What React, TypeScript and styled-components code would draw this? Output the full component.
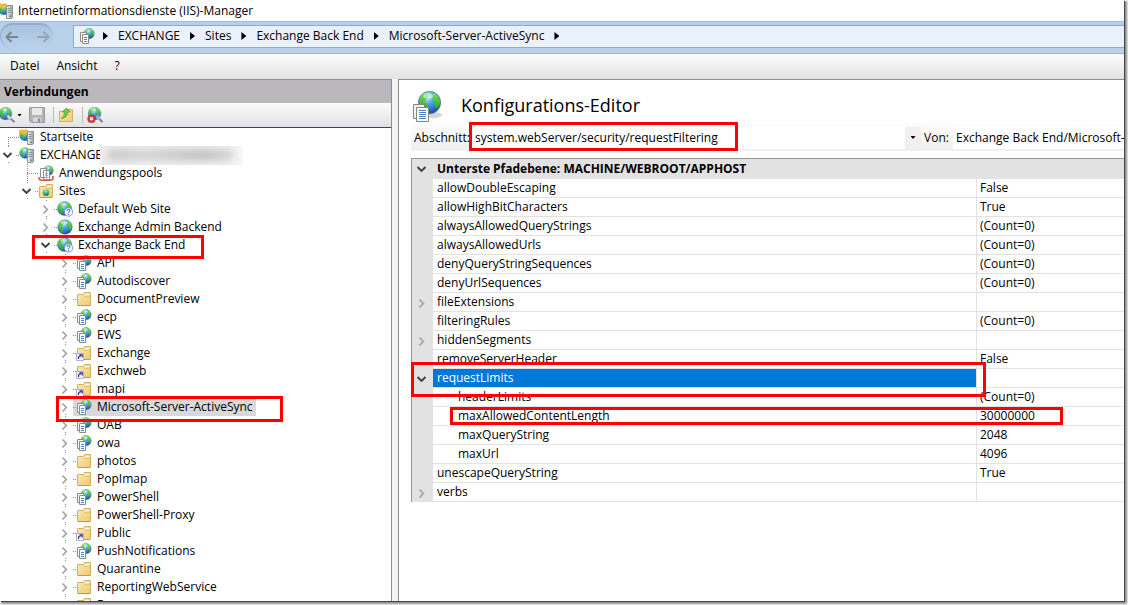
import React from "react";
import styled, { createGlobalStyle, css } from "styled-components";

const GlobalStyle = createGlobalStyle`
  * { box-sizing: border-box; }
  body {
    margin: 0;
    background: #ffffff;
    color: #000000;
    font-family: "Open Sans", "Noto Sans", sans-serif;
    font-size: 12px;
    line-height: 18px;
  }
  button, select { font: inherit; color: inherit; }
  ul, ol { list-style: none; margin: 0; padding: 0; }
`;

/* ---------- icons ---------- */

const Icon = styled.svg<{ $size?: number }>`
  display: block;
  flex: none;
  width: ${(p) => p.$size ?? 16}px;
  height: ${(p) => p.$size ?? 16}px;
`;

const HiddenDefs = styled.svg`
  position: absolute;
  width: 0;
  height: 0;
`;

function SharedGradients() {
  return (
    <HiddenDefs aria-hidden="true">
      <defs>
        <radialGradient id="ocean" cx="0.4" cy="0.25" r="0.8">
          <stop offset="0" stopColor="#c4f2ff" />
          <stop offset="0.4" stopColor="#49a5ec" />
          <stop offset="1" stopColor="#1b3fae" />
        </radialGradient>
        <linearGradient id="land" x1="0" y1="0" x2="0" y2="1">
          <stop offset="0" stopColor="#7be044" />
          <stop offset="1" stopColor="#27a138" />
        </linearGradient>
        <linearGradient id="manila" x1="0" y1="0" x2="1" y2="1">
          <stop offset="0" stopColor="#fdeab4" />
          <stop offset="1" stopColor="#f0ca72" />
        </linearGradient>
        <linearGradient id="steel" x1="0" y1="0" x2="1" y2="0">
          <stop offset="0" stopColor="#f4f6f6" />
          <stop offset="1" stopColor="#98a2a6" />
        </linearGradient>
      </defs>
    </HiddenDefs>
  );
}

function Globe({ cx, cy, r }: { cx: number; cy: number; r: number }) {
  return (
    <g transform={`translate(${cx - r} ${cy - r}) scale(${r / 8})`}>
      <circle cx="8" cy="8" r="7.8" fill="url(#ocean)" stroke="#4a74b4" strokeWidth="0.4" />
      <path d="M1.2 4.8 3 2.4 6.2.8 8 1.4 6.6 3 7.4 4.2 5 6 4.6 7.6 6.8 9 7 11 5.4 14.6 3.4 13.4 3 10.4 1 8z" fill="url(#land)" />
      <path d="M9.8 2.2 12 1.6 14.6 4.4 15.6 8 14.4 10.8 12.8 12.6 11.4 10 11.8 8 9.6 6.6 10.6 4.6z" fill="url(#land)" />
      <ellipse cx="7" cy="3.4" rx="3.4" ry="1.8" fill="#ffffff" opacity="0.45" />
    </g>
  );
}

function Pages() {
  return (
    <g stroke="#8a8a8a" strokeWidth="1">
      <path d="M1.5 4.5h6v9h-6z" fill="#ffffff" />
      <path d="M3.5 6.5h6v9h-6z" fill="#ffffff" />
      <path d="M5 9.5h3M5 11.5h3M5 13.5h3" stroke="#4a86c8" />
    </g>
  );
}

function FolderShape() {
  return (
    <g>
      <path d="M1.5 4Q1.5 3.5 2 3.5h5.5l1-2H14q.5 0 .5.5v12q0 .5-.5.5H2q-.5 0-.5-.5z" fill="url(#manila)" stroke="#d6b05c" />
      <path d="M9 3.5h4.5" stroke="#fffdf2" />
      <path d="M8 5.5h6" stroke="#dfbb69" strokeWidth="0.7" />
      <path d="M2 14.5h12" stroke="#c39b48" />
    </g>
  );
}

function ServerShape() {
  return (
    <g>
      <path d="M8.5 3.5 10 2.5h4.5v12l-1 1h-5z" fill="url(#steel)" stroke="#7f898c" strokeWidth="0.9" />
      <path d="M9.5 5.5h4M9.5 7.5h4M9.5 9.5h4" stroke="#8d979a" />
      <path d="M11 13.3h2" stroke="#46b545" strokeWidth="1.4" />
    </g>
  );
}

type IconName =
  | "start"
  | "server"
  | "pools"
  | "sites"
  | "globe"
  | "globeQuestion"
  | "app"
  | "folder"
  | "shortcut"
  | "connect"
  | "disconnect"
  | "save"
  | "folderUp";

const drawings: Record<IconName, React.ReactNode> = {
  start: (
    <>
      <Globe cx={6} cy={6.5} r={5.5} />
      <path d="M0 2 3 .5l1.5 1.6L8 .5l1.2 4L6 5.5 3 4.4.6 6z" fill="#f9bd35" stroke="#e3991d" strokeWidth="0.5" />
      <ServerShape />
    </>
  ),
  server: (
    <>
      <Globe cx={6} cy={6} r={5.6} />
      <ServerShape />
    </>
  ),
  pools: (
    <>
      <Globe cx={10.5} cy={5.5} r={5} />
      <path d="M1 12v2.5M15 11v3.5M1 14.5l4 1h6l4-1" fill="none" stroke="#d0504a" strokeWidth="1.5" />
      <g stroke="#858585" fill="#ffffff" strokeWidth="0.9">
        <path d="M2.5 3.5h6v9h-6zM5.5 5.5h6v9h-6z" />
        <path d="M7 8.5h3M7 10.5h3M7 12.5h3" stroke="#a7a7a7" />
      </g>
    </>
  ),
  sites: (
    <>
      <FolderShape />
      <Globe cx={8} cy={9.7} r={3.2} />
    </>
  ),
  globe: <Globe cx={8} cy={8} r={7.5} />,
  globeQuestion: (
    <>
      <Globe cx={7.5} cy={7.5} r={7.3} />
      <circle cx="11.5" cy="11" r="4.2" fill="#f2f6fd" stroke="#5a86c8" strokeWidth="0.8" />
      <path d="M10 10q0-1.6 1.5-1.6T13 10q0 .8-1.5 1.6v.6M11.5 13v1" fill="none" stroke="#3a68b8" strokeWidth="1" />
    </>
  ),
  app: (
    <>
      <Globe cx={10} cy={5.6} r={5.4} />
      <Pages />
    </>
  ),
  folder: <FolderShape />,
  shortcut: (
    <>
      <FolderShape />
      <path d="M.5 8.5h7v7h-7z" fill="#f4f4fb" stroke="#b3b3cb" />
      <path d="M2.5 14v-1.5Q2.5 11 5 11M3.4 9.8h2.8v2.8" fill="none" stroke="#2d2d8b" strokeWidth="1.2" />
    </>
  ),
  connect: (
    <>
      <Globe cx={6.5} cy={6.5} r={6.5} />
      <path d="M8.5 9l3 3" stroke="#a3b1bf" strokeWidth="3.2" />
      <path d="M12 12l3.5 3" stroke="#6e8296" strokeWidth="1.8" />
      <path d="M8.5 8.5l3 3" stroke="#e9eff4" strokeWidth="1.2" />
    </>
  ),
  disconnect: (
    <>
      <Globe cx={7.5} cy={6.5} r={6.5} />
      <path d="M9.5 9l3 3" stroke="#a3b1bf" strokeWidth="3.2" />
      <path d="M12.5 12l3 3" stroke="#6e8296" strokeWidth="1.8" />
      <circle cx="4.5" cy="11.8" r="3.9" fill="#d3333a" stroke="#a8282c" strokeWidth="0.5" />
      <path d="M3 10.3l3 3M6 10.3l-3 3" stroke="#ffffff" strokeWidth="1.3" />
    </>
  ),
  save: (
    <>
      <path d="M.5.5h15v15H2.2L.5 13.8z" fill="#b4b4b4" stroke="#9c9c9c" />
      <path d="M3 1h10v7H3z" fill="#e9e9e9" />
      <path d="M4 10.5h8V15H4z" fill="#d9d9d9" />
      <path d="M9 11.5h2V15H9z" fill="#8c8c8c" />
    </>
  ),
  folderUp: (
    <>
      <path d="M1.5 4.5h6l1-2h6v12h-13z" fill="url(#manila)" stroke="#d6b05c" />
      <path d="M3 11.5Q6.5 10 6.5 5H4L8.5 1l4 4H9.8Q9.5 11 3 11.5z" fill="#6cc94d" stroke="#3f9a36" strokeWidth="0.6" />
    </>
  ),
};

function Glyph({ name }: { name: IconName }) {
  return (
    <Icon viewBox="0 0 16 16" aria-hidden="true">
      {drawings[name]}
    </Icon>
  );
}

/* ---------- window frame ---------- */

const Desktop = styled.div`
  height: 100vh;
  padding: 0 4px 4px 0;
  overflow: hidden;
  background: #ffffff;
`;

const Window = styled.div`
  display: flex;
  flex-direction: column;
  height: 100%;
  background: #f0f0f0;
  box-shadow: 1px 1px 0 #474747, 2px 2px 2px 1px #8a8a8a;
`;

const TitleBar = styled.header`
  display: flex;
  align-items: center;
  gap: 4px;
  flex: none;
  height: 21px;
  background: #ffffff;
  overflow: hidden;
  svg { margin-left: -2px; }
`;

const Title = styled.h1`
  margin: 0;
  font-size: 12px;
  font-weight: 400;
`;

const AddressBar = styled.nav`
  display: flex;
  align-items: center;
  flex: none;
  height: 33px;
  padding-bottom: 3px;
  border-top: 1px solid #a3bfdf;
  border-bottom: 1px solid #a3b6cc;
  background: linear-gradient(#b5cfeb, #bad2eb);
`;

const History = styled.div`
  display: flex;
  flex: none;
  align-items: center;
  gap: 16px;
  width: 53px;
  height: 27px;
  margin-right: 20px;
  padding-left: 3px;
  border-top: 2px solid #92acc9;
  border-left: 1px solid #92acc9;
  border-radius: 14px 14px 16px 16px;
  background: linear-gradient(#a9c2df, #bad2eb);
`;

const HistoryButton = styled.button`
  padding: 0;
  border: 0;
  background: none;
`;

const Path = styled.ol`
  display: flex;
  flex: 1;
  align-items: center;
  height: 23px;
  padding-left: 5px;
  border: 1px solid #92abc8;
  border-right: 0;
  background: #eaf1fa;
`;

const Crumb = styled.li`
  display: flex;
  align-items: center;
`;

const CrumbLink = styled.a`
  color: inherit;
  text-decoration: none;
`;

const CrumbArrow = styled.span`
  width: 5px;
  height: 8px;
  margin: 0 10px;
  background: #000000;
  clip-path: polygon(0 0, 100% 50%, 0 100%);
  ${Crumb}:first-child & { margin-left: 8px; }
`;

const MenuBar = styled.div`
  display: flex;
  flex: none;
  align-items: center;
  gap: 17px;
  height: 25px;
  padding: 0 0 2px 10px;
  background: linear-gradient(#fdfdfd, #e3e3e3);
`;

const MenuButton = styled.button`
  padding: 0;
  border: 0;
  background: none;
`;

const Panels = styled.div`
  display: grid;
  grid-template-columns: 392px minmax(0, 1fr);
  gap: 6px;
  flex: 1;
  min-height: 0;
  background: #f3f3f3;
`;

/* ---------- connections ---------- */

const Connections = styled.aside`
  display: flex;
  flex-direction: column;
  min-height: 0;
  border-top: 1px solid #8b8f92;
  border-right: 1px solid #8b8f92;
  background: #ffffff;
`;

const PanelTitle = styled.h2`
  flex: none;
  margin: 0;
  height: 23px;
  padding: 3px 4px;
  background: #bbb8bb;
  font-size: 12px;
  font-weight: 700;
`;

const Toolbar = styled.div`
  display: flex;
  flex: none;
  align-items: center;
  height: 25px;
  border-bottom: 1px solid #3d3f6b;
  background: linear-gradient(#fbfbfb, #e2e2e2);
`;

const ToolButton = styled.button<{ $clipped?: boolean }>`
  display: flex;
  align-items: center;
  gap: 2px;
  padding: 0;
  border: 0;
  background: none;
  margin-left: ${(p) => (p.$clipped ? -1 : 0)}px;
  margin-right: ${(p) => (p.$clipped ? 7 : 0)}px;
`;

const Separator = styled.span`
  width: 1px;
  height: 16px;
  margin: 0 4px 0 8px;
  background: #bcc0a8;
`;

const Caret = styled.span`
  width: 5px;
  height: 3px;
  background: #000000;
  clip-path: polygon(0 0, 100% 0, 50% 100%);
`;

const Tree = styled.ul`
  flex: 1;
  min-height: 0;
  overflow: hidden;
`;

const Row = styled.div<{ $level: number }>`
  position: relative;
  display: flex;
  align-items: center;
  height: 18px;
  padding-left: ${(p) => p.$level * 19}px;
  white-space: nowrap;
`;

const dotted = css`
  background: repeating-linear-gradient(#8e8e8e 0 1px, transparent 1px 2px) 8px 0 / 1px 100% no-repeat;
`;

const Toggle = styled.button`
  display: flex;
  align-items: center;
  justify-content: center;
  flex: none;
  width: 16px;
  height: 18px;
  padding: 0;
  border: 0;
  ${dotted}
  svg { background: #ffffff; }
`;

const LeafLine = styled.span<{ $first: boolean }>`
  flex: none;
  width: 16px;
  height: 18px;
  background:
    repeating-linear-gradient(90deg, #8e8e8e 0 1px, transparent 1px 2px) 8px 9px / 8px 1px no-repeat,
    repeating-linear-gradient(#8e8e8e 0 1px, transparent 1px 2px) 8px ${(p) => (p.$first ? 9 : 0)}px / 1px 100% no-repeat;
`;

const Node = styled.span<{ $selected?: boolean }>`
  display: flex;
  align-items: center;
  height: 18px;
  padding: 0 3px;
  gap: 5px;
  background:
    repeating-linear-gradient(90deg, #8e8e8e 0 1px, transparent 1px 2px) 0 9px / 4px 1px no-repeat,
    ${(p) => (p.$selected ? "#d9d9d9" : "transparent")};
`;

const Redacted = styled.span`
  position: absolute;
  left: 100px;
  top: 0;
  width: 143px;
  height: 19px;
  overflow: hidden;
  background: linear-gradient(90deg, #efeeee, #f1f0f0 85%, #f8f8f8);
  &::before {
    content: "";
    display: block;
    height: 10px;
    margin: 4px 10px 0 8px;
    background: linear-gradient(90deg, #c4c2c2, #d2d0d0 30%, #bbb9b9 75%, #d2d1d1);
    filter: blur(4px);
  }
`;

/* Red frames that call out a part of the window. */
const Marker = styled.span<{ $top: number; $left: number; $right?: number; $width?: number; $height: number }>`
  position: absolute;
  z-index: 1;
  top: ${(p) => p.$top}px;
  left: ${(p) => p.$left}px;
  height: ${(p) => p.$height}px;
  ${(p) => (p.$width ? `width: ${p.$width}px;` : `right: ${p.$right}px;`)}
  border: 3px solid #fe0000;
  pointer-events: none;
`;

function Chevron({ open }: { open: boolean }) {
  return (
    <Icon $size={14} viewBox="0 0 14 14" aria-hidden="true">
      <path
        d={open ? "M2.5 5l4 4 4-4" : "M4.5 3.5 8.3 7.5 4.5 11.5"}
        fill="none"
        stroke={open ? "#404040" : "#a3a3a3"}
        strokeWidth={open ? 1.9 : 1.7}
      />
    </Icon>
  );
}

interface TreeItem {
  label: string;
  icon: IconName;
  level: number;
  state: "leaf" | "open" | "closed";
  selected?: boolean;
  redacted?: boolean;
  marker?: { top: number; left: number; width: number; height: number };
}

const child = (label: string, icon: IconName): TreeItem => ({ label, icon, level: 3, state: "closed" });

const items: TreeItem[] = [
  { label: "Startseite", icon: "start", level: 0, state: "leaf" },
  { label: "EXCHANGE", icon: "server", level: 0, state: "open", redacted: true },
  { label: "Anwendungspools", icon: "pools", level: 1, state: "leaf" },
  { label: "Sites", icon: "sites", level: 1, state: "open" },
  { label: "Default Web Site", icon: "globeQuestion", level: 2, state: "closed" },
  { label: "Exchange Admin Backend", icon: "globe", level: 2, state: "closed" },
  {
    label: "Exchange Back End",
    icon: "globeQuestion",
    level: 2,
    state: "open",
    marker: { top: -1, left: 32, width: 172, height: 24 },
  },
  child("API", "app"),
  child("Autodiscover", "app"),
  child("DocumentPreview", "folder"),
  child("ecp", "app"),
  child("EWS", "app"),
  child("Exchange", "shortcut"),
  child("Exchweb", "shortcut"),
  child("mapi", "shortcut"),
  {
    ...child("Microsoft-Server-ActiveSync", "app"),
    selected: true,
    marker: { top: -2, left: 56, width: 227, height: 26 },
  },
  child("OAB", "app"),
  child("owa", "app"),
  child("photos", "folder"),
  child("PopImap", "folder"),
  child("PowerShell", "app"),
  child("PowerShell-Proxy", "folder"),
  child("Public", "shortcut"),
  child("PushNotifications", "app"),
  child("Quarantine", "folder"),
  child("ReportingWebService", "folder"),
  child("Rpc", "folder"),
];

function TreeRow({ item, first }: { item: TreeItem; first: boolean }) {
  return (
    <li role="treeitem" aria-level={item.level + 1} aria-selected={!!item.selected}>
      <Row $level={item.level}>
        {item.state === "leaf" ? (
          <LeafLine $first={first} />
        ) : (
          <Toggle aria-label={`${item.label} umschalten`}>
            <Chevron open={item.state === "open"} />
          </Toggle>
        )}
        <Node $selected={item.selected}>
          <Glyph name={item.icon} />
          {item.label}
        </Node>
        {item.redacted && <Redacted />}
        {item.marker && (
          <Marker
            $top={item.marker.top}
            $left={item.marker.left}
            $width={item.marker.width}
            $height={item.marker.height}
          />
        )}
      </Row>
    </li>
  );
}

/* ---------- configuration editor ---------- */

const Editor = styled.main`
  min-width: 0;
  padding-left: 12px;
  border-top: 1px solid #8b8f92;
  border-left: 1px solid #8b8f92;
  background: #ffffff;
  overflow: hidden;
`;

const EditorHeader = styled.div`
  display: flex;
  align-items: center;
  gap: 16px;
  height: 44px;
  padding: 8px 0 0 2px;
`;

const EditorTitle = styled.h2`
  margin: 0;
  padding-bottom: 2px;
  font-size: 18px;
  line-height: 28px;
  font-weight: 400;
`;

const SectionBar = styled.div`
  position: relative;
  display: flex;
  align-items: center;
  height: 27px;
  margin-bottom: 7px;
  padding-left: 3px;
  background: linear-gradient(#fdfdfd, #efefef);
  white-space: nowrap;
`;

const FieldLabel = styled.label<{ $width: number }>`
  flex: none;
  width: ${(p) => p.$width}px;
`;

const Combo = styled.div<{ $width?: number }>`
  display: grid;
  grid-template-columns: minmax(0, 1fr) 16px;
  flex: ${(p) => (p.$width ? `0 0 ${p.$width}px` : "1 1 0")};
  min-width: 0;
  height: 22px;
  background: #ffffff;
`;

const Select = styled.select`
  grid-area: 1 / 1 / 2 / 3;
  appearance: none;
  min-width: 0;
  height: 22px;
  padding: 0 0 0 3px;
  border: 0;
  border-radius: 0;
  background: transparent;
  text-overflow: clip;
`;

const ComboArrow = styled.span`
  display: flex;
  grid-area: 1 / 2 / 2 / 3;
  align-items: center;
  justify-content: center;
  background: #f0f0f0;
  pointer-events: none;
`;

const Grid = styled.table`
  width: 100%;
  border-collapse: separate;
  border-spacing: 0;
  table-layout: fixed;
  border-top: 1px solid #949699;
  border-left: 1px solid #949699;
`;

const Gutter = styled.td`
  width: 21px;
  padding: 0;
  background: #e2e2e2;
`;

const GutterToggle = styled.button`
  display: flex;
  align-items: center;
  justify-content: center;
  width: 19px;
  height: 18px;
  padding: 0;
  border: 0;
  background: none;
`;

const Category = styled.th`
  height: 20px;
  padding: 0 4px;
  background: #e2e2e2;
  font-weight: 700;
  text-align: left;
`;

const NameCell = styled.th<{ $nested?: boolean; $selected?: boolean }>`
  position: relative;
  height: 19px;
  padding: 0 0 0 ${(p) => (p.$nested ? 25 : 4)}px;
  border-right: 1px solid #e2e2e2;
  border-bottom: 1px solid #e2e2e2;
  background: ${(p) => (p.$selected ? "#0078d7" : "#ffffff")};
  background-clip: padding-box;
  color: ${(p) => (p.$selected ? "#ffffff" : "#000000")};
  font-weight: 400;
  line-height: 18px;
  text-align: left;
`;

const ValueCell = styled.td`
  height: 19px;
  padding: 0 3px;
  border-bottom: 1px solid #e2e2e2;
  line-height: 18px;
`;

interface Property {
  name: string;
  value?: string;
  expand?: "open" | "closed";
  nested?: boolean;
  selected?: boolean;
  marker?: { top: number; left: number; right: number; height: number };
}

const properties: Property[] = [
  { name: "allowDoubleEscaping", value: "False" },
  { name: "allowHighBitCharacters", value: "True" },
  { name: "alwaysAllowedQueryStrings", value: "(Count=0)" },
  { name: "alwaysAllowedUrls", value: "(Count=0)" },
  { name: "denyQueryStringSequences", value: "(Count=0)" },
  { name: "denyUrlSequences", value: "(Count=0)" },
  { name: "fileExtensions", expand: "closed" },
  { name: "filteringRules", value: "(Count=0)" },
  { name: "hiddenSegments", expand: "closed" },
  { name: "removeServerHeader", value: "False" },
  {
    name: "requestLimits",
    expand: "open",
    selected: true,
    marker: { top: -7, left: -22, right: -10, height: 35 },
  },
  { name: "headerLimits", value: "(Count=0)", nested: true },
  {
    name: "maxAllowedContentLength",
    value: "30000000",
    nested: true,
    marker: { top: 0, left: 17, right: -87, height: 18 },
  },
  { name: "maxQueryString", value: "2048", nested: true },
  { name: "maxUrl", value: "4096", nested: true },
  { name: "unescapeQueryString", value: "True" },
  { name: "verbs", expand: "closed" },
];

function PropertyGrid() {
  return (
    <Grid>
      <colgroup>
        <col width="21" />
        <col />
        <col width="147" />
      </colgroup>
      <tbody>
        <tr>
          <Gutter>
            <GutterToggle aria-label="Kategorie umschalten">
              <Chevron open />
            </GutterToggle>
          </Gutter>
          <Category colSpan={2}>Unterste Pfadebene: MACHINE/WEBROOT/APPHOST</Category>
        </tr>
        {properties.map((p) => (
          <tr key={p.name}>
            <Gutter>
              {p.expand && (
                <GutterToggle aria-label={`${p.name} umschalten`}>
                  <Chevron open={p.expand === "open"} />
                </GutterToggle>
              )}
            </Gutter>
            <NameCell scope="row" $nested={p.nested} $selected={p.selected}>
              {p.name}
              {p.marker && (
                <Marker
                  $top={p.marker.top}
                  $left={p.marker.left}
                  $right={p.marker.right}
                  $height={p.marker.height}
                />
              )}
            </NameCell>
            <ValueCell>{p.value}</ValueCell>
          </tr>
        ))}
      </tbody>
    </Grid>
  );
}

const crumbs = ["EXCHANGE", "Sites", "Exchange Back End", "Microsoft-Server-ActiveSync"];

export default function App() {
  return (
    <Desktop>
      <GlobalStyle />
      <SharedGradients />
      <Window>
        <TitleBar>
          <Glyph name="start" />
          <Title>Internetinformationsdienste (IIS)-Manager</Title>
        </TitleBar>

        <AddressBar aria-label="Pfad">
          <History>
            <HistoryButton aria-label="Zurück">
              <Icon viewBox="0 0 16 16">
                <path d="M14 8H2.5M7.5 3l-5 5 5 5" fill="none" stroke="#7a838e" strokeWidth="2" />
              </Icon>
            </HistoryButton>
            <HistoryButton aria-label="Vorwärts">
              <Icon viewBox="0 0 16 16">
                <path d="M1 8h11.5M7.5 3l5 5-5 5" fill="none" stroke="#93a5b9" strokeWidth="2" />
              </Icon>
            </HistoryButton>
          </History>
          <Path>
            <Crumb>
              <Glyph name="app" />
              <CrumbArrow />
            </Crumb>
            {crumbs.map((c) => (
              <Crumb key={c}>
                <CrumbLink href="#">{c}</CrumbLink>
                <CrumbArrow />
              </Crumb>
            ))}
          </Path>
        </AddressBar>

        <MenuBar>
          <MenuButton>Datei</MenuButton>
          <MenuButton>Ansicht</MenuButton>
          <MenuButton>?</MenuButton>
        </MenuBar>

        <Panels>
          <Connections>
            <PanelTitle>Verbindungen</PanelTitle>
            <Toolbar>
              <ToolButton $clipped aria-label="Verbinden">
                <Glyph name="connect" />
                <Caret />
              </ToolButton>
              <ToolButton aria-label="Speichern">
                <Glyph name="save" />
              </ToolButton>
              <Separator />
              <ToolButton aria-label="Nach oben">
                <Glyph name="folderUp" />
              </ToolButton>
              <Separator />
              <ToolButton aria-label="Trennen">
                <Glyph name="disconnect" />
              </ToolButton>
            </Toolbar>
            <Tree role="tree">
              {items.map((item, i) => (
                <TreeRow key={item.label} item={item} first={i === 0} />
              ))}
            </Tree>
          </Connections>

          <Editor>
            <EditorHeader>
              <Icon $size={32} viewBox="0 0 32 32" aria-hidden="true">
                <ellipse cx="20" cy="25" rx="9" ry="3" fill="#d4d4d4" />
                <Globe cx={16.5} cy={12.5} r={11.5} />
                <g stroke="#8b8478" strokeWidth="1">
                  <path d="M.5 14.5h11v14H.5z" fill="#f6f2ea" />
                  <path d="M3.5 17.5h12v14h-12z" fill="#ffffff" />
                  <path d="M6 20.5h7M6 22.5h7M6 24.5h7M6 26.5h7M6 28.5h7" stroke="#4a7fc4" />
                </g>
              </Icon>
              <EditorTitle>Konfigurations-Editor</EditorTitle>
            </EditorHeader>
            <SectionBar>
              <FieldLabel htmlFor="section" $width={58}>
                Abschnitt:
              </FieldLabel>
              <Combo>
                <Select id="section" defaultValue="requestFiltering">
                  <option value="requestFiltering">system.webServer/security/requestFiltering</option>
                </Select>
                <ComboArrow>
                  <Caret />
                </ComboArrow>
              </Combo>
              <FieldLabel htmlFor="origin" $width={32}>
                &nbsp;Von:
              </FieldLabel>
              <Combo $width={171}>
                <Select id="origin" defaultValue="site">
                  <option value="site">Exchange Back End/Microsoft-Server-ActiveSync</option>
                </Select>
              </Combo>
              <Marker $top={-2} $left={58} $width={269} $height={29} />
            </SectionBar>
            <PropertyGrid />
          </Editor>
        </Panels>
      </Window>
    </Desktop>
  );
}
